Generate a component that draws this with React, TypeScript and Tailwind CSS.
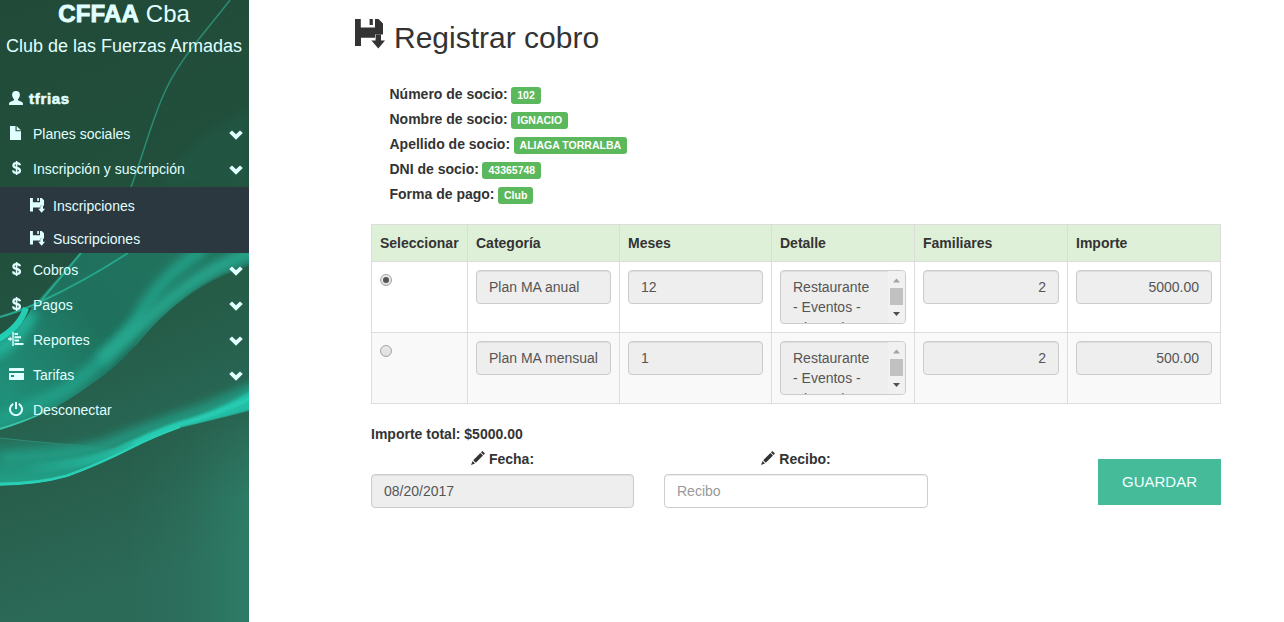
import React from "react";

type IconProps = { className?: string };

const FloppyIcon = ({ className = "" }: IconProps) => (
  <svg viewBox="0 0 30 30" fill="currentColor" className={className}>
    <path d="M0 0H5.8V8.5H20V0H23.5L28 4.5V15.5H20V18.8H6V27H0Z" />
    <path d="M14.6 0H17.8V6H14.6Z" />
    <path d="M20.6 15.5H26V21.5H30L23.3 29.6L16.4 21.5H20.6Z" />
  </svg>
);

const UserIcon = ({ className = "" }: IconProps) => (
  <svg viewBox="0 0 14 14" fill="currentColor" className={className}>
    <path d="M7 0C9.6 0 11 1.5 10.9 3.8C10.8 5.6 10.1 7.2 9 8.2V9.3L13 11C13.7 11.4 14 12.2 14 14H0C0 12.2.3 11.4 1 11L5 9.3V8.2C3.9 7.2 3.2 5.6 3.1 3.8C3 1.5 4.4 0 7 0Z" />
  </svg>
);

const FileIcon = ({ className = "" }: IconProps) => (
  <svg viewBox="0 0 14 14" fill="currentColor" className={className}>
    <path d="M1 0H6.5V5.2H12V14H1Z" />
    <path d="M7.6 0L12 4.2H7.6Z" />
  </svg>
);

const DollarIcon = ({ className = "" }: IconProps) => (
  <svg viewBox="0 0 14 14" fill="none" stroke="currentColor" className={className}>
    <path d="M11 4.2C10.7 2.7 9.3 2.1 7.6 2.1C5.7 2.1 4.4 2.9 4.4 4.4C4.4 6 5.7 6.4 7.6 6.9C9.7 7.4 11 8 11 9.6C11 11.1 9.7 12 7.7 12C5.6 12 4.2 11.1 4 9.4" strokeWidth="2.2" />
    <path d="M7.6 0V14" strokeWidth="1.6" />
  </svg>
);

const ReportIcon = ({ className = "" }: IconProps) => (
  <svg viewBox="0 0 16 14" fill="currentColor" className={className}>
    <path d="M4.3 0H5.7V14H4.3ZM6.5 1H10V3H6.5ZM6.5 4.2H13V6.2H6.5ZM6.5 7.5H11V9.5H6.5ZM6.5 11H15.5V13H6.5ZM0 6.3H1.8V4.6L4.2 7L1.8 9.4V7.7H0Z" />
  </svg>
);

const CardIcon = ({ className = "" }: IconProps) => (
  <svg viewBox="0 0 15 12" fill="currentColor" className={className}>
    <path fillRule="evenodd" d="M.6 0H14.4L15 .6V3H0V.6ZM0 5H15V11.4L14.4 12H.6L0 11.4ZM2 7V9H5V7Z" />
  </svg>
);

const PowerIcon = ({ className = "" }: IconProps) => (
  <svg viewBox="0 0 14 14" fill="none" stroke="currentColor" strokeWidth="2" className={className}>
    <path d="M4.3 1.8A6 6 0 1 0 9.7 1.8M7 0V7" />
  </svg>
);

const ChevronIcon = ({ className = "" }: IconProps) => (
  <svg viewBox="0 0 14 10" fill="currentColor" className={className}>
    <path d="M3 .4L7 4.2L11 .4L13.8 3.1L7 9.8L.2 3.1Z" />
  </svg>
);

const PencilIcon = ({ className = "" }: IconProps) => (
  <svg viewBox="0 0 14 14" fill="currentColor" className={className}>
    <path d="M11.4 0L14 2.6L12.6 4L10 1.4ZM9.4 2L12 4.6L4.8 11.8L2.2 9.2ZM1.6 10L4 12.4L0 14Z" />
  </svg>
);

const Waves = () => (
  <svg viewBox="0 0 249 622" className="absolute inset-0 h-full w-full">
    <defs>
      <linearGradient id="base" x1="0" y1="0" x2="0.15" y2="1">
        <stop offset="0" stopColor="#224a38" />
        <stop offset="0.4" stopColor="#21503d" />
        <stop offset="0.75" stopColor="#275c49" />
        <stop offset="1" stopColor="#2c6a58" />
      </linearGradient>
      <linearGradient id="side" x1="0.5" y1="0" x2="1" y2="0">
        <stop offset="0" stopColor="#2d7f69" stopOpacity="0" />
        <stop offset="0.5" stopColor="#2d7f69" stopOpacity="0.25" />
        <stop offset="1" stopColor="#2d7f69" stopOpacity="0.85" />
      </linearGradient>
      <linearGradient id="fade" x1="0" y1="0" x2="0" y2="1">
        <stop offset="0" stopColor="#fff" stopOpacity="0" />
        <stop offset="0.5" stopColor="#fff" stopOpacity="1" />
      </linearGradient>
      <mask id="low">
        <rect y="380" width="249" height="242" fill="url(#fade)" />
      </mask>
      <linearGradient id="veil" gradientUnits="userSpaceOnUse" x1="190" y1="250" x2="10" y2="400">
        <stop offset="0" stopColor="#22735e" />
        <stop offset="0.5" stopColor="#1f705c" />
        <stop offset="1" stopColor="#208f79" />
      </linearGradient>
      <linearGradient id="mid" gradientUnits="userSpaceOnUse" x1="110" y1="340" x2="150" y2="450">
        <stop offset="0" stopColor="#255c48" />
        <stop offset="0.7" stopColor="#276552" />
        <stop offset="1" stopColor="#25846d" />
      </linearGradient>
      <linearGradient id="left" gradientUnits="userSpaceOnUse" x1="40" y1="437" x2="45" y2="480">
        <stop offset="0" stopColor="#26715c" />
        <stop offset="0.6" stopColor="#22937b" />
        <stop offset="1" stopColor="#21a087" />
      </linearGradient>
      <linearGradient id="crest" gradientUnits="userSpaceOnUse" x1="20" y1="0" x2="130" y2="0">
        <stop offset="0" stopColor="#24bda4" stopOpacity="0" />
        <stop offset="1" stopColor="#24bda4" />
      </linearGradient>
      <filter id="b1" x="-30%" y="-30%" width="160%" height="160%"><feGaussianBlur stdDeviation="0.7" /></filter>
      <filter id="b2" x="-30%" y="-30%" width="160%" height="160%"><feGaussianBlur stdDeviation="1.6" /></filter>
      <filter id="b4" x="-30%" y="-30%" width="160%" height="160%"><feGaussianBlur stdDeviation="5" /></filter>
      <clipPath id="veilClip">
        <path d="M80 253L32 307Q23 327 0 340V430Q50 415 90 385Q115 369 135 346C163 311 200 279 249 264V253Z" />
      </clipPath>
      <clipPath id="waveClip">
        <path d="M0 380H249V411Q213 420 180 428Q155 437 133 448Q100 465 67 477Q38 485 0 486Z" />
      </clipPath>
    </defs>
    <rect width="249" height="622" fill="url(#base)" />
    <rect y="380" width="249" height="242" fill="url(#side)" mask="url(#low)" />
    <path d="M249 110Q190 135 160 187H249Z" fill="#24604c" opacity="0.35" filter="url(#b4)" />
    <path d="M230 0C205 33 178 60 163 96C150 126 142 158 131 187" fill="none" stroke="#2a8c72" strokeWidth="1.5" filter="url(#b1)" />
    <path d="M249 264C200 279 163 311 135 346Q115 369 90 385Q50 415 0 430V439Q60 446 115 447Q185 426 249 390Z" fill="url(#mid)" />
    <path d="M80 253L32 307Q23 327 0 340V430Q50 415 90 385Q115 369 135 346C163 311 200 279 249 264V253Z" fill="url(#veil)" />
    <g clipPath="url(#veilClip)">
      <path d="M205 248Q157 280 137 320Q109 359 65 390Q30 408 -10 423" fill="none" stroke="#21a088" strokeWidth="12" filter="url(#b4)" />
      <path d="M258 250Q205 268 160 308L100 360" fill="none" stroke="#25a88f" strokeWidth="12" filter="url(#b4)" />
      <path d="M32 312Q15 345 -10 354" fill="none" stroke="#20b098" strokeWidth="14" filter="url(#b4)" />
      <path d="M60 406Q30 420 0 429" fill="none" stroke="#3bc3a7" strokeWidth="2" filter="url(#b1)" />
    </g>
    <path d="M249 265C200 280 163 311 135 346" fill="none" stroke="#279f86" strokeWidth="1" opacity="0.6" filter="url(#b1)" />
    <path d="M81 253Q61 277 39 303M128 253Q85 281 40 302Q18 312 0 317" fill="none" stroke="#27a68c" strokeWidth="2" filter="url(#b1)" />
    <path d="M26 308Q20 327 -3 340" fill="none" stroke="#24cdb1" strokeWidth="6" filter="url(#b1)" />
    <g clipPath="url(#waveClip)">
      <path d="M0 438Q60 445 115 447L190 418Q140 450 67 477Q38 486 0 486Z" fill="url(#left)" />
      <path d="M262 384Q215 407 180 418Q140 431 105 446Q60 456 0 458" fill="none" stroke="#239e86" strokeWidth="9" filter="url(#b4)" />
      <path d="M255 388Q213 412 180 421Q150 431 115 448Q75 462 20 464L20 474Q90 470 133 450Q155 437 180 428Q213 422 255 409Z" fill="url(#crest)" filter="url(#b2)" />
      <path d="M255 396Q213 416 180 424Q155 432 133 444" fill="none" stroke="#29d2b8" strokeWidth="3" filter="url(#b2)" />
      <path d="M180 427Q155 436 133 447Q100 464 67 476Q38 484 0 484" fill="none" stroke="#29d0b5" strokeWidth="3" filter="url(#b1)" />
    </g>
    <path d="M0 438Q60 445 115 447" fill="none" stroke="#2b8c76" strokeWidth="1" filter="url(#b1)" />
  </svg>
);

type Item = { label: string; Icon: (p: IconProps) => React.ReactElement; arrow: boolean; size: string };

const topItems: Item[] = [
  { label: "Planes sociales", Icon: FileIcon, arrow: true, size: "h-3.5 w-3.5" },
  { label: "Inscripción y suscripción", Icon: DollarIcon, arrow: true, size: "h-3.5 w-3.5" },
];
const bottomItems: Item[] = [
  { label: "Cobros", Icon: DollarIcon, arrow: true, size: "h-3.5 w-3.5" },
  { label: "Pagos", Icon: DollarIcon, arrow: true, size: "h-3.5 w-3.5" },
  { label: "Reportes", Icon: ReportIcon, arrow: true, size: "-ml-px h-3.5 w-4" },
  { label: "Tarifas", Icon: CardIcon, arrow: true, size: "h-3 w-[15px]" },
  { label: "Desconectar", Icon: PowerIcon, arrow: false, size: "h-3.5 w-3.5" },
];

const MenuItem = ({ label, Icon, arrow, size }: Item) => (
  <li className="flex h-[35px] items-center pl-[9px] pr-1.5">
    <span className="flex w-6 shrink-0 pb-0.5">
      <Icon className={size} />
    </span>
    <span className="grow">{label}</span>
    {arrow && <ChevronIcon className="mt-0.5 h-2.5 w-3.5" />}
  </li>
);

const members = [
  ["Número de socio:", "102"],
  ["Nombre de socio:", "IGNACIO"],
  ["Apellido de socio:", "ALIAGA TORRALBA"],
  ["DNI de socio:", "43365748"],
  ["Forma de pago:", "Club"],
];

const plans = [
  { name: "Plan MA anual", months: "12", amount: "5000.00", checked: true },
  { name: "Plan MA mensual", months: "1", amount: "500.00", checked: false },
];

const field =
  "flex h-[34px] items-center rounded border border-[#ccc] bg-[#eee] px-3 pb-px text-[#555] shadow-[inset_0_1px_1px_rgba(0,0,0,0.075)]";

const Detail = () => (
  <div className="flex h-[54px] justify-between overflow-hidden rounded border border-[#ccc] bg-[#eee] text-[#555] shadow-[inset_0_1px_1px_rgba(0,0,0,0.075)]">
    <p className="whitespace-nowrap pl-3 pt-1.5 leading-5">
      Restaurante
      <br />- Eventos -
      <span className="block pt-px">Gimnasio -</span>
    </p>
    <div className="flex w-[17px] flex-col items-center bg-[#f1f1f1]">
      <svg viewBox="0 0 17 17" className="h-[17px] w-[17px] shrink-0">
        <path d="M5 11.5L8.5 7.5L12 11.5Z" fill="#a3a3a3" />
      </svg>
      <div className="h-[17px] w-[13px] shrink-0 bg-[#c1c1c1]" />
      <svg viewBox="0 0 17 17" className="h-[17px] w-[17px] shrink-0">
        <path d="M5 7L8.5 11L12 7Z" fill="#505050" />
      </svg>
    </div>
  </div>
);

const Radio = ({ checked }: { checked: boolean }) => (
  <span className="mt-1 flex h-3 w-3 items-center justify-center rounded-full border border-[#a5a5a5] bg-linear-to-b from-[#e9e9e9] to-[#dedede]">
    {checked && <span className="h-1.5 w-1.5 rounded-full bg-[#555]" />}
  </span>
);

export default function App() {
  return (
    <div className="flex h-[622px] w-[1284px] overflow-hidden bg-white font-['Liberation_Sans',Arial,sans-serif] text-sm leading-5 text-[#333]">
      <aside className="relative w-[249px] shrink-0 overflow-hidden text-[#e0ffff]">
        <Waves />
        <div className="relative">
          <h1 className="h-[27px] pr-px text-center text-2xl leading-[27px]">
            <b className="tracking-[0.2px] [-webkit-text-stroke:0.9px]">CFFAA</b> Cba
          </h1>
          <h2 className="h-[54px] whitespace-nowrap pr-px text-center text-lg leading-[38px]">Club de las Fuerzas Armadas</h2>
          <div className="flex h-[35px] items-center pl-[9px]">
            <UserIcon className="mb-0.5 h-3.5 w-3.5" />
            <b className="ml-1.5 text-[15px] tracking-[0.7px] [-webkit-text-stroke:0.6px]">tfrias</b>
          </div>
          <ul>
            {topItems.map((item) => (
              <MenuItem key={item.label} {...item} />
            ))}
          </ul>
          <ul className="mt-px h-[66px] bg-[#2c3840]">
            {["Inscripciones", "Suscripciones"].map((label) => (
              <li key={label} className="flex h-[33px] items-center pl-[30px] pt-1">
                <FloppyIcon className="mr-2 h-[15px] w-[15px]" />
                {label}
              </li>
            ))}
          </ul>
          <ul className="-mt-px">
            {bottomItems.map((item) => (
              <MenuItem key={item.label} {...item} />
            ))}
          </ul>
        </div>
      </aside>

      <main className="w-[972px] pl-[106px] pt-[19px]">
        <h1 className="flex h-9 text-[30px] leading-[38px]">
          <FloppyIcon className="mr-[9px] h-[30px] w-[30px]" />
          Registrar cobro
        </h1>
        <div className="ml-[34.5px] mt-[29px]">
          {members.map(([label, value]) => (
            <div key={label} className="flex h-[25px] font-bold">
              <span className="leading-[21px]">{label}</span>
              <span className="ml-[3.5px] mt-[3px] h-[17px] rounded-[3px] bg-[#5cb85c] px-[6px] text-[10.5px] leading-[17px] text-white">
                {value}
              </span>
            </div>
          ))}
        </div>

        <div className="ml-4 mt-[15px]">
          <table className="w-[850px] table-fixed border-collapse">
            <colgroup>
              <col className="w-[96px]" />
              <col className="w-[152px]" />
              <col className="w-[152px]" />
              <col className="w-[143px]" />
              <col className="w-[153px]" />
              <col className="w-[153px]" />
            </colgroup>
            <thead>
              <tr className="h-[37px] bg-[#dff0d8] text-left">
                {["Seleccionar", "Categoría", "Meses", "Detalle", "Familiares", "Importe"].map((h) => (
                  <th key={h} className="border border-[#ddd] px-2 py-0">
                    {h}
                  </th>
                ))}
              </tr>
            </thead>
            <tbody>
              {plans.map((plan) => (
                <tr key={plan.name} className="h-[71px] align-top even:bg-[#f9f9f9]">
                  <td className="border border-[#ddd] p-2">
                    <Radio checked={plan.checked} />
                  </td>
                  <td className="border border-[#ddd] p-2">
                    <div className={`${field} whitespace-nowrap`}>{plan.name}</div>
                  </td>
                  <td className="border border-[#ddd] p-2">
                    <div className={field}>{plan.months}</div>
                  </td>
                  <td className="border border-[#ddd] p-2">
                    <Detail />
                  </td>
                  <td className="border border-[#ddd] p-2">
                    <div className={`${field} justify-end`}>2</div>
                  </td>
                  <td className="border border-[#ddd] p-2">
                    <div className={`${field} justify-end`}>{plan.amount}</div>
                  </td>
                </tr>
              ))}
            </tbody>
          </table>

          <p className="mt-5 font-bold">Importe total: $5000.00</p>
          <div className="mt-[5px] flex w-[850px] items-start">
            <div className="w-[263px]">
              <div className="flex items-center justify-center font-bold">
                <PencilIcon className="mb-0.5 mr-1 h-3.5 w-3.5" />
                Fecha:
              </div>
              <div className={`${field} mt-[5px]`}>08/20/2017</div>
            </div>
            <div className="ml-[30px] w-[264px]">
              <div className="flex items-center justify-center font-bold">
                <PencilIcon className="mb-0.5 mr-1 h-3.5 w-3.5" />
                Recibo:
              </div>
              <div className="mt-[5px] flex h-[34px] items-center rounded border border-[#ccc] px-3 pb-px text-[#999] shadow-[inset_0_1px_1px_rgba(0,0,0,0.075)]">
                Recibo
              </div>
            </div>
            <button className="ml-auto mt-[10px] h-[46px] w-[123px] bg-[#45bb99] text-[15px] text-[#f0ffff]">GUARDAR</button>
          </div>
        </div>
      </main>
    </div>
  );
}
